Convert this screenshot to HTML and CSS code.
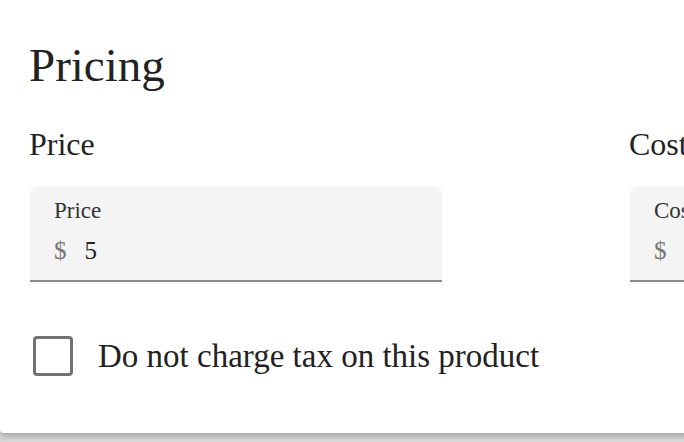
FILE: index.html
```html
<!DOCTYPE html>
<html lang="en">

<head>
    <meta charset="UTF-8">
    <meta name="viewport" content="width=device-width, initial-scale=1.0">
    <title>Pricing</title>
    <link rel="stylesheet" href="styles.css">
</head>

<body>
    <section class="card">
        <h2 class="card-title">Pricing</h2>

        <div class="price-grid">
            <div class="price-col">
                <h3 class="col-title">Price</h3>
                <label class="field">
                    <span class="field-label">Price</span>
                    <span class="field-row">
                        <span class="field-prefix">$</span>
                        <input class="field-input" type="text" value="5">
                    </span>
                </label>
            </div>
            <div class="price-col">
                <h3 class="col-title">Cost</h3>
                <label class="field">
                    <span class="field-label">Cost per item</span>
                    <span class="field-row">
                        <span class="field-prefix">$</span>
                        <input class="field-input" type="text" value="">
                    </span>
                </label>
            </div>
        </div>

        <label class="check-row">
            <input type="checkbox" class="check-input">
            <span class="check-box"></span>
            <span class="check-text">Do not charge tax on this product</span>
        </label>
    </section>
</body>

</html>
```

FILE: styles.css
```css
* {
    box-sizing: border-box;
}

body {
    margin: 0;
    height: 442px;
    overflow: hidden;
    background-color: #d9d9d9;
    font-family: "Liberation Serif", "Times New Roman", serif;
    color: #222;
}

.card {
    width: 1260px;
    padding: 37px 29px 57px;
    background-color: #fff;
    border-radius: 0 0 4px 4px;
    box-shadow: 0 3px 6px rgba(0, 0, 0, 0.25);
}

.card-title {
    margin: 0;
    font-size: 47px;
    line-height: 56px;
    font-weight: normal;
}

.price-grid {
    display: grid;
    grid-template-columns: 600px 600px;
    margin-top: 31px;
}

.col-title {
    margin: 0 0 22px;
    font-size: 32px;
    line-height: 40px;
    font-weight: normal;
}

.field {
    display: block;
    width: 412px;
    margin-left: 1px;
    padding: 11px 24px 14px;
    background-color: #f4f4f4;
    border-bottom: 2px solid #8a8a8a;
    border-radius: 8px 8px 0 0;
}

.field-label {
    display: block;
    font-size: 23px;
    line-height: 28px;
    color: #333;
    white-space: nowrap;
}

.field-row {
    display: flex;
    align-items: baseline;
    margin-top: 11px;
    font-size: 25px;
    line-height: 30px;
}

.field-prefix {
    color: #757575;
    margin-right: 18px;
}

.field-input {
    flex: 1;
    min-width: 0;
    padding: 0;
    border: none;
    background: none;
    font: inherit;
    color: #222;
    outline: none;
}

.check-row {
    display: flex;
    align-items: center;
    margin-top: 54px;
    margin-left: 4px;
}

/* 진짜 체크박스는 숨기고 그린 박스를 씁니다 */
.check-input {
    position: absolute;
    opacity: 0;
}

.check-box {
    width: 40px;
    height: 40px;
    border: 3px solid #737373;
    border-radius: 4px;
}

.check-text {
    margin-left: 25px;
    font-size: 33px;
    line-height: 40px;
}
```
